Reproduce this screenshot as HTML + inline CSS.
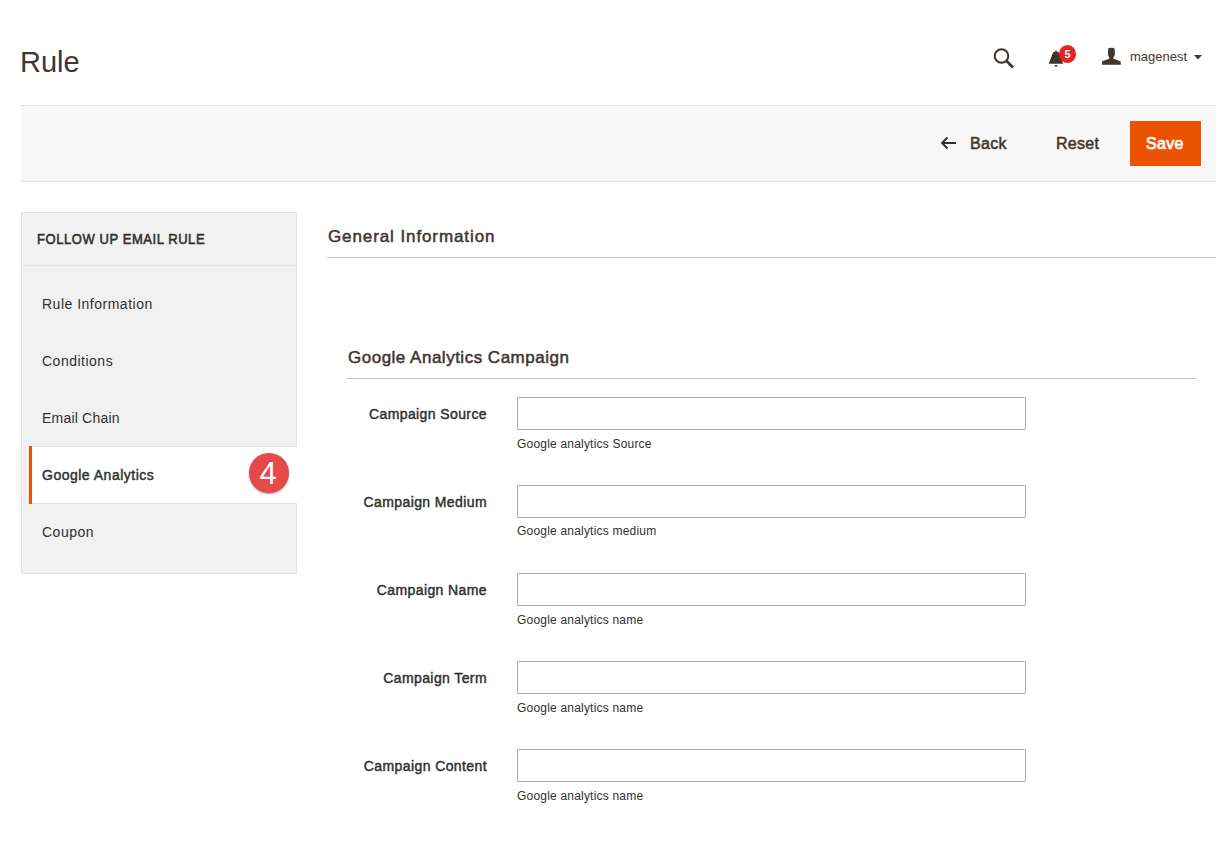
<!DOCTYPE html>
<html>
<head>
<meta charset="utf-8">
<style>
*{margin:0;padding:0;box-sizing:border-box}
html,body{width:1222px;height:858px;overflow:hidden;background:#fff}
body{font-family:"Liberation Sans",sans-serif;color:#303030;position:relative}
.a{position:absolute;white-space:nowrap;line-height:1}
.title{left:20px;top:48px;font-size:29px;color:#41362f}
.toolbar{left:21px;top:105px;width:1195px;height:77px;background:#f8f8f8;border-top:1px solid #e3e3e3;border-bottom:1px solid #e3e3e3}
.save{left:1130px;top:121px;width:71px;height:45px;background:#eb5202}
.btxt{font-size:16px;font-weight:normal;color:#41362f;-webkit-text-stroke:0.55px currentColor;letter-spacing:0.3px}
.nav{left:21px;top:212px;width:276px;height:362px;background:#f1f1f1;border:1px solid #e3e3e3}
.navsep{left:22px;top:265px;width:274px;height:1px;background:#e3e3e3}
.navtitle{left:37px;top:232px;font-size:14px;font-weight:normal;color:#303030;letter-spacing:0.6px;-webkit-text-stroke:0.55px currentColor;transform:scaleX(0.93);transform-origin:0 0}
.item{left:42px;font-size:14px;color:#303030;letter-spacing:0.5px}
.active{left:29px;top:446px;width:268px;height:58px;background:#fff;border-top:1px solid #e3e3e3;border-bottom:1px solid #e3e3e3}
.abar{left:29px;top:446px;width:3px;height:58px;background:#eb5202}
.badge{left:249px;top:453px;width:40px;height:40px;border-radius:50%;background:#e5494a;text-indent:-2px;box-shadow:0 1px 2px rgba(0,0,0,.35);color:#fff;font-size:31px;text-align:center;line-height:42px}
.h2{font-size:17px;font-weight:normal;color:#41362f;-webkit-text-stroke:0.5px currentColor}
.line{height:1px;background:#cac3b4}
.lbl{font-size:14px;font-weight:normal;color:#303030;-webkit-text-stroke:0.45px currentColor;letter-spacing:0.4px;text-align:right;width:200px;left:287px}
.inp{left:517px;width:509px;height:33px;border:1px solid #adadad;border-radius:1px;background:#fff}
.note{left:517px;font-size:12px;color:#303030;letter-spacing:0.2px}
</style>
</head>
<body>
<div class="a title">Rule</div>

<!-- header icons -->
<svg class="a" style="left:990px;top:44px" width="28" height="28" viewBox="0 0 28 28">
  <circle cx="11.5" cy="12" r="6.8" fill="none" stroke="#41362f" stroke-width="2"/>
  <line x1="16.3" y1="16.8" x2="23" y2="23.5" stroke="#41362f" stroke-width="2.8"/>
</svg>
<svg class="a" style="left:1042px;top:40px" width="38" height="32" viewBox="0 0 38 32">
  <path d="M13 11.8 L14 10 L15 11.8 L16 11.8 Q16.8 12 17.1 13 L21.3 23.7 L6.7 23.7 L10.9 13 Q11.2 12 12 11.8 Z" fill="#41362f"/>
  <path d="M12.3 25 L15.7 25 L14.6 26.8 L13.4 26.8 Z" fill="#41362f"/>
</svg>
<div class="a" style="left:1059px;top:45px;width:17px;height:17.5px;border-radius:50%;background:#e22626;color:#fff;font-size:11px;font-weight:bold;text-align:center;line-height:19px">5</div>
<svg class="a" style="left:1095px;top:42px" width="35" height="28" viewBox="0 0 35 28">
  <path d="M13.3 6.4 C14.3 5.6 18.6 5.6 19.6 6.6 L19.9 11.5 C19.9 13 19.1 14.5 18.4 15.5 L18.4 16.8 L25.6 19.2 L25.8 22.7 L7 22.7 L7.2 19.2 L14.3 16.8 L14.3 15.5 C13.6 14.5 12.9 13 12.9 11.5 Z" fill="#41362f"/>
</svg>
<div class="a" style="left:1130px;top:50px;font-size:13px;color:#41362f">magenest</div>
<svg class="a" style="left:1193px;top:54px" width="10" height="7" viewBox="0 0 10 7">
  <path d="M1 1 L9 1 L5 5.5 Z" fill="#41362f"/>
</svg>

<!-- toolbar -->
<div class="a toolbar"></div>
<svg class="a" style="left:940px;top:136px" width="18" height="14" viewBox="0 0 18 14">
  <path d="M2 7 L16 7 M7.5 1.5 L2 7 L7.5 12.5" fill="none" stroke="#303030" stroke-width="1.9"/>
</svg>
<div class="a btxt" style="left:970px;top:136px">Back</div>
<div class="a btxt" style="left:1056px;top:136px">Reset</div>
<div class="a save"></div>
<div class="a btxt" style="left:1146px;top:136px;color:#fff;-webkit-text-stroke:0.7px #fff">Save</div>

<!-- nav -->
<div class="a nav"></div>
<div class="a navsep"></div>
<div class="a navtitle">FOLLOW UP EMAIL RULE</div>
<div class="a item" style="top:297px">Rule Information</div>
<div class="a item" style="top:354px">Conditions</div>
<div class="a item" style="top:411px;letter-spacing:0.2px">Email Chain</div>
<div class="a active"></div><div class="a abar"></div>
<div class="a item" style="top:468px;letter-spacing:0.5px;-webkit-text-stroke:0.45px currentColor">Google Analytics</div>
<div class="a item" style="top:525px">Coupon</div>
<div class="a badge">4</div>

<!-- content -->
<div class="a h2" style="left:328px;top:228px;letter-spacing:0.9px">General Information</div>
<div class="a line" style="left:327px;top:257px;width:889px"></div>
<div class="a h2" style="left:348px;top:349px;letter-spacing:0.5px">Google Analytics Campaign</div>
<div class="a line" style="left:347px;top:378px;width:849px"></div>

<div class="a lbl" style="top:407px">Campaign Source</div>
<div class="a inp" style="top:397px"></div>
<div class="a note" style="top:438px">Google analytics Source</div>

<div class="a lbl" style="top:495px">Campaign Medium</div>
<div class="a inp" style="top:485px"></div>
<div class="a note" style="top:525px">Google analytics medium</div>

<div class="a lbl" style="top:583px">Campaign Name</div>
<div class="a inp" style="top:573px"></div>
<div class="a note" style="top:614px">Google analytics name</div>

<div class="a lbl" style="top:671px">Campaign Term</div>
<div class="a inp" style="top:661px"></div>
<div class="a note" style="top:702px">Google analytics name</div>

<div class="a lbl" style="top:759px">Campaign Content</div>
<div class="a inp" style="top:749px"></div>
<div class="a note" style="top:790px">Google analytics name</div>
</body>
</html>
